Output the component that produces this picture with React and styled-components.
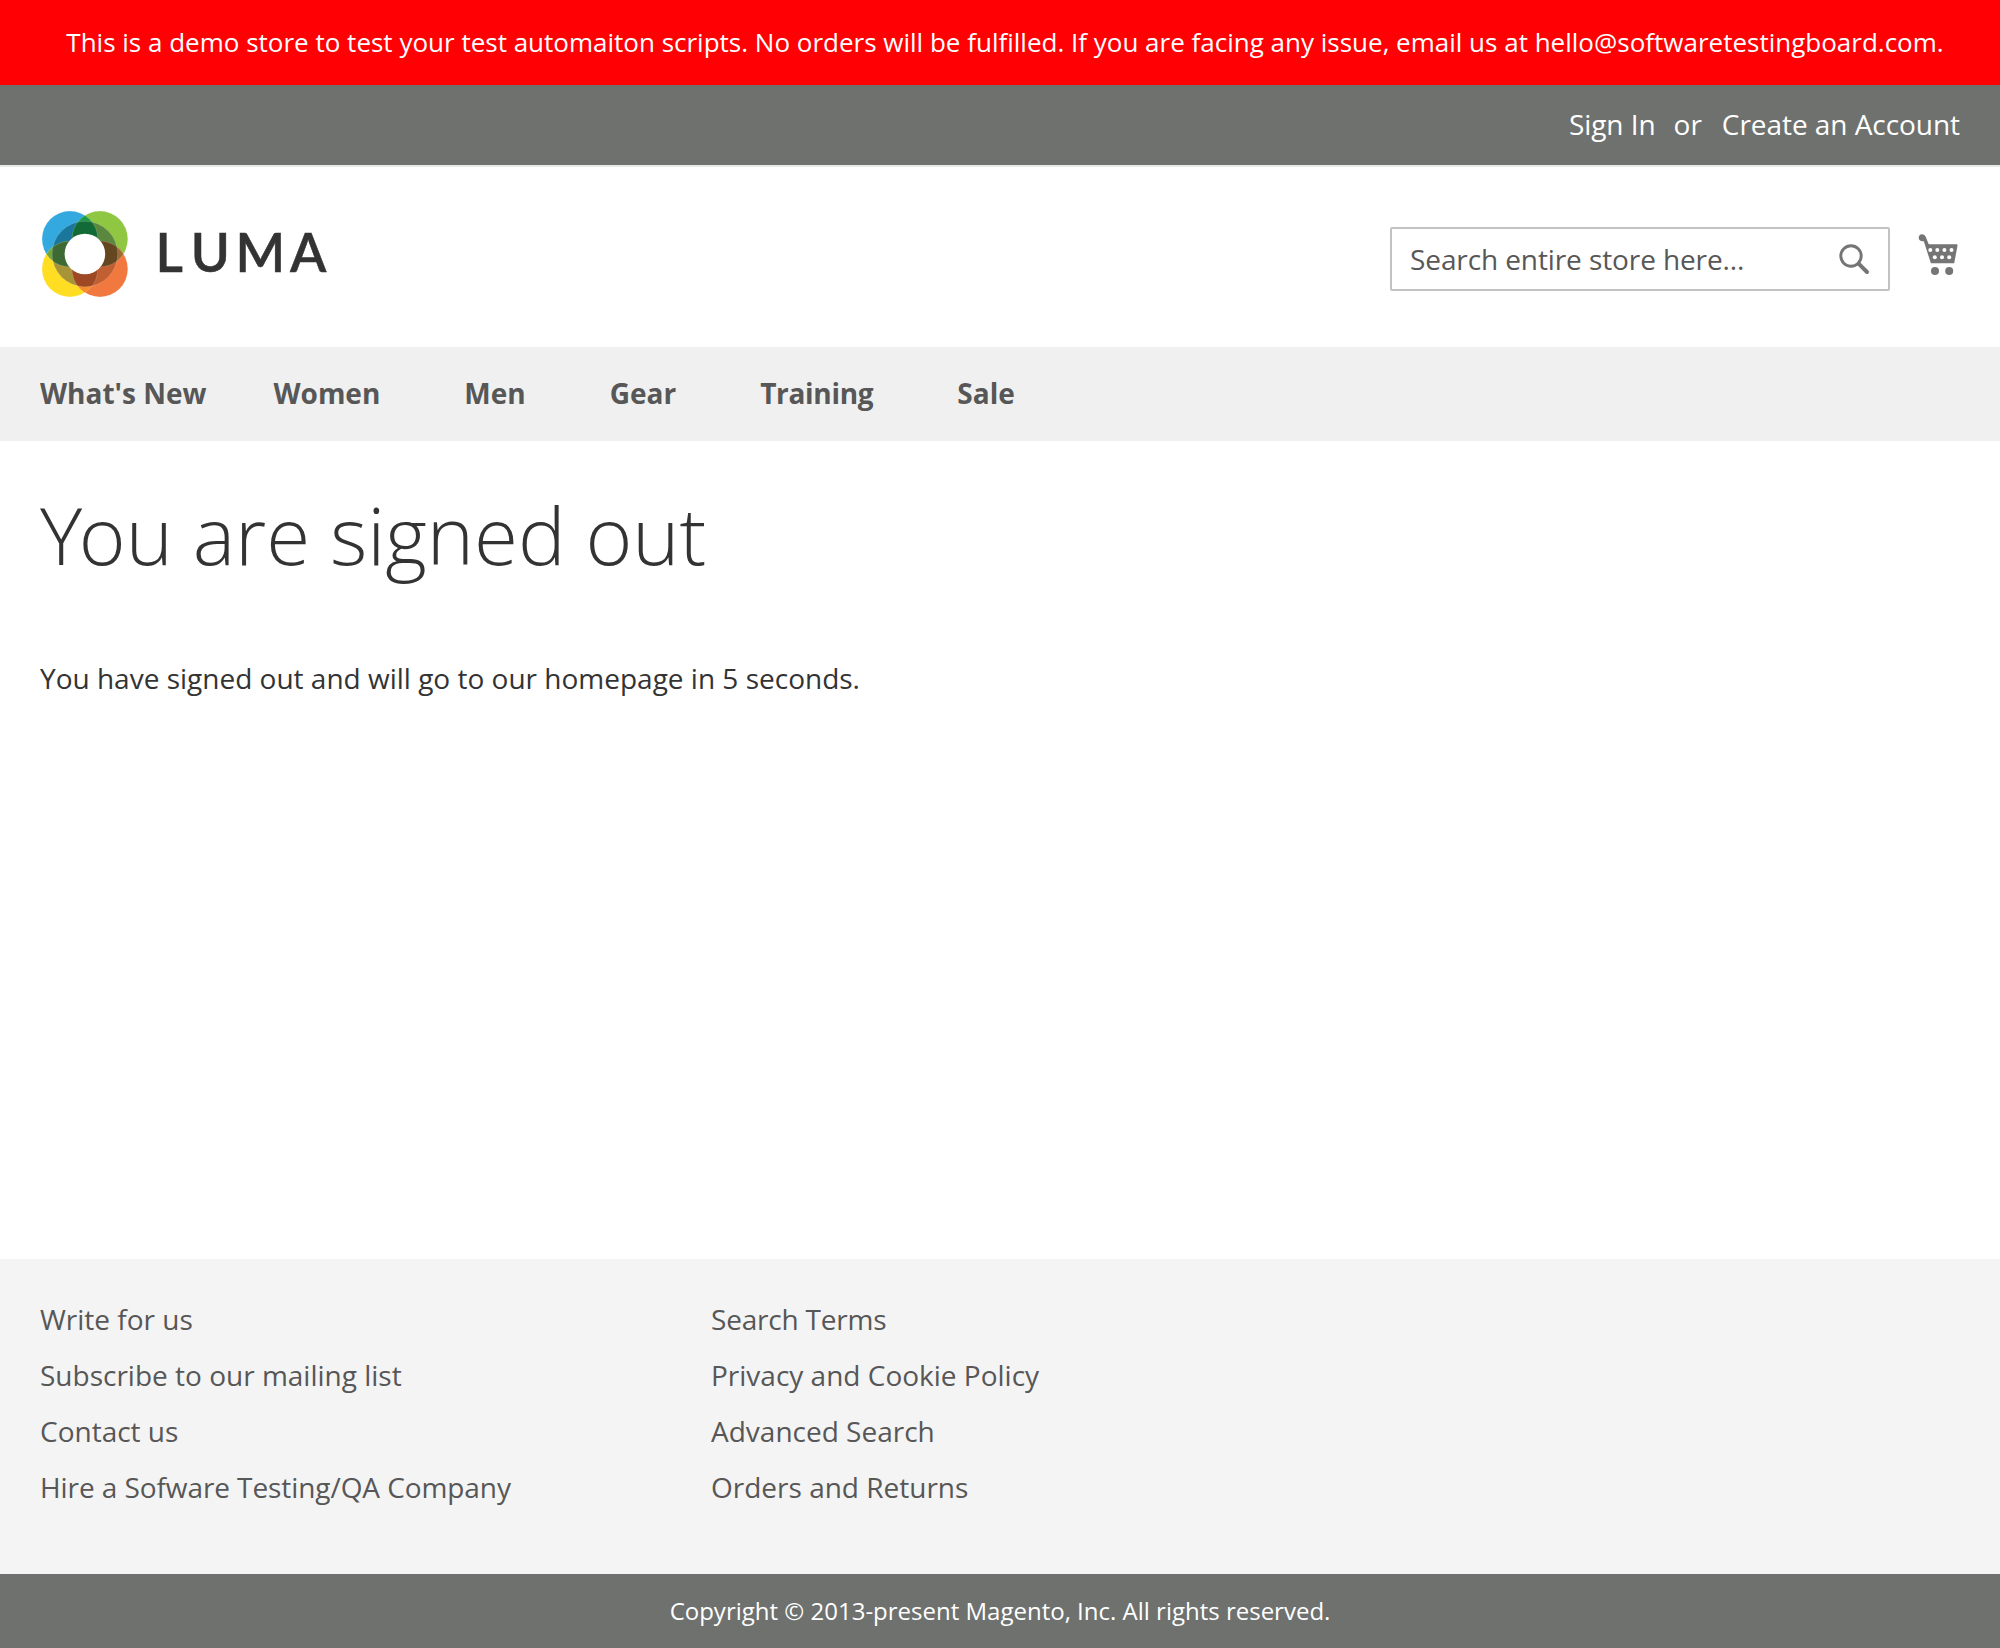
import React from 'react';
import styled, { createGlobalStyle } from 'styled-components';

const GlobalStyle = createGlobalStyle`
  *, *::before, *::after { box-sizing: border-box; }
  body {
    margin: 0;
    background: #fff;
    color: #333;
    font-family: "Open Sans", sans-serif;
    font-size: 28px;
    line-height: 40px;
  }
`;

const Page = styled.div`
  display: flex;
  flex-direction: column;
  min-height: 1648px;
`;

const Notice = styled.p`
  margin: 0;
  height: 85px;
  padding: 22px 0 0 10px;
  background: #ff0004;
  color: #fff;
  font-size: 26px;
  text-align: center;
  white-space: nowrap;
`;

const AccountBar = styled.div`
  display: flex;
  justify-content: flex-end;
  height: 82px;
  padding: 19px 40px 0;
  background: #6e716e;
  border-bottom: 2px solid #e8e8e8;
  color: #fff;
`;

const AccountLink = styled.a`
  color: inherit;
  margin-left: ${(p) => p.$gap || 0}px;
  letter-spacing: -0.05px;
`;

const Header = styled.header`
  display: flex;
  align-items: flex-start;
  height: 180px;
  padding: 42px 40px 0;
`;

const Logo = styled.a`
  margin-right: auto;
  svg { display: block; }
`;

const Wordmark = styled.text`
  font-family: Lato, sans-serif;
  font-weight: 600;
  font-size: 53px;
  fill: #333;
`;

const SearchBox = styled.form`
  display: flex;
  align-items: center;
  justify-content: space-between;
  width: 500px;
  height: 64px;
  margin-top: 18px;
  padding: 0 18px 0 18px;
  border: 2px solid #c2c2c2;
  border-radius: 2px;
  color: #575757;
  letter-spacing: -0.1px;
`;

const Cart = styled.a`
  margin: 24px 0 0 28px;
  svg { display: block; }
`;

const Nav = styled.nav`
  display: flex;
  height: 94px;
  padding: 26px 40px 0;
  background: #f0f0f0;
  color: #575757;
  font-weight: 700;
`;

const NavItem = styled.a`
  margin-right: ${(p) => p.$after || 84}px;
  letter-spacing: ${(p) => p.$tracking || 0}px;
`;

const Main = styled.main`
  flex: 1;
  padding: 49px 40px 0;
`;

const Title = styled.h1`
  margin: 0;
  font-size: 80px;
  font-weight: 300;
  line-height: 88px;
  word-spacing: -1px;

  &::first-letter {
    letter-spacing: -3.5px;
  }
`;

const Message = styled.p`
  margin: 80px 0 0;
`;

const Footer = styled.footer`
  display: flex;
  height: 315px;
  padding: 40px 40px 0;
  background: #f4f4f4;
  color: #575757;
`;

const LinkList = styled.ul`
  width: 671px;
  margin: 0;
  padding: 0;
  list-style: none;
`;

const LinkItem = styled.li`
  margin-bottom: 16px;
  letter-spacing: ${(p) => p.$tracking || 0}px;
`;

const Copyright = styled.small`
  display: block;
  height: 74px;
  padding-top: 17px;
  background: #6e716e;
  color: #fff;
  font-size: 24px;
  text-align: center;
`;

const navItems = [
  { label: "What's New", after: 67 },
  { label: 'Women' },
  { label: 'Men' },
  { label: 'Gear' },
  { label: 'Training', tracking: -0.3 },
  { label: 'Sale' },
];

const footerColumns = [
  [
    { label: 'Write for us' },
    { label: 'Subscribe to our mailing list' },
    { label: 'Contact us' },
    { label: 'Hire a Sofware Testing/QA Company', tracking: -0.08 },
  ],
  [
    { label: 'Search Terms', tracking: -0.2 },
    { label: 'Privacy and Cookie Policy' },
    { label: 'Advanced Search' },
    { label: 'Orders and Returns' },
  ],
];

const LumaLogo = () => (
  <svg width="296" height="92" viewBox="40 209 296 92" role="img" aria-label="Luma">
    <defs>
      <clipPath id="blue"><circle cx="69.9" cy="239" r="27.9" /></clipPath>
      <clipPath id="orange"><circle cx="99.9" cy="269" r="27.9" /></clipPath>
      <clipPath id="ring"><circle cx="84.9" cy="254" r="32.8" /></clipPath>
    </defs>
    <circle cx="69.9" cy="239" r="27.9" fill="#33a9e0" />
    <circle cx="99.9" cy="239" r="27.9" fill="#8fc642" />
    <circle cx="69.9" cy="269" r="27.9" fill="#fedd22" />
    <circle cx="99.9" cy="269" r="27.9" fill="#f1793f" />
    <g clipPath="url(#blue)">
      <circle cx="99.9" cy="239" r="27.9" fill="#1c9a49" />
      <circle cx="69.9" cy="269" r="27.9" fill="#6fa53a" />
    </g>
    <g clipPath="url(#orange)">
      <circle cx="99.9" cy="239" r="27.9" fill="#9c6a35" />
      <circle cx="69.9" cy="269" r="27.9" fill="#f68b2c" />
    </g>
    <g clipPath="url(#ring)">
      <circle cx="69.9" cy="239" r="27.9" fill="#1a769b" />
      <circle cx="99.9" cy="239" r="27.9" fill="#5c873f" />
      <circle cx="69.9" cy="269" r="27.9" fill="#a79437" />
      <circle cx="99.9" cy="269" r="27.9" fill="#c05f31" />
      <g clipPath="url(#blue)">
        <circle cx="99.9" cy="239" r="27.9" fill="#126b37" />
        <circle cx="69.9" cy="269" r="27.9" fill="#3d6a33" />
      </g>
      <g clipPath="url(#orange)">
        <circle cx="99.9" cy="239" r="27.9" fill="#644620" />
        <circle cx="69.9" cy="269" r="27.9" fill="#9e4824" />
      </g>
    </g>
    <g fill="none" stroke="#fff" strokeOpacity="0.3" strokeWidth="0.5">
      <circle cx="69.9" cy="239" r="27.9" />
      <circle cx="99.9" cy="239" r="27.9" />
      <circle cx="69.9" cy="269" r="27.9" />
      <circle cx="99.9" cy="269" r="27.9" />
      <circle cx="84.9" cy="254" r="32.8" />
    </g>
    <circle cx="84.9" cy="254" r="20.3" fill="#fff" />
    <Wordmark x="155.5 190.7 235.5 290" y="272" stroke="#333" strokeWidth="0.5">LUMA</Wordmark>
  </svg>
);

const SearchIcon = () => (
  <svg width="32" height="32" viewBox="0 0 32 32" fill="none" stroke="#757575">
    <circle cx="13" cy="13" r="10.2" strokeWidth="2.9" />
    <path d="M20.600 20.600 29 29" strokeWidth="4" strokeLinecap="round" />
  </svg>
);

const CartIcon = () => (
  <svg width="42" height="42" viewBox="0 0 42 42" fill="#757575">
    <path d="M0.800 5.500C.400 3 1.800 1.300 3.800 1.300c2 0 3.200.800 4 2.700L10.700 11.300h27.600c.900 0 1.400.600 1.200 1.500L36.200 30.300H12.900L5.800 8.200C3.200 8.600 1.200 7.700.800 5.500Z" />
    <g fill="#fff">
      <circle cx="12.300" cy="17" r="2" /><circle cx="19.300" cy="17" r="2" />
      <circle cx="26.400" cy="17" r="2" /><circle cx="33.500" cy="17" r="2" />
      <circle cx="16.800" cy="24.300" r="2" /><circle cx="24" cy="24.300" r="2" />
      <circle cx="31.200" cy="24.300" r="2" />
    </g>
    <circle cx="17" cy="38" r="4" /><circle cx="31.200" cy="38" r="4" />
  </svg>
);

export default function App() {
  return (
    <>
      <GlobalStyle />
      <Page>
        <Notice>
          This is a demo store to test your test automaiton scripts. No orders will be fulfilled. If you are facing any issue, email us at hello@softwaretestingboard.com.
        </Notice>
        <AccountBar>
          <AccountLink>Sign In</AccountLink>
          <AccountLink as="span" $gap={18}>or</AccountLink>
          <AccountLink $gap={20}>Create an Account</AccountLink>
        </AccountBar>
        <Header>
          <Logo><LumaLogo /></Logo>
          <SearchBox>
            <span>Search entire store here...</span>
            <SearchIcon />
          </SearchBox>
          <Cart><CartIcon /></Cart>
        </Header>
        <Nav>
          {navItems.map(({ label, after, tracking }) => (
            <NavItem key={label} $after={after} $tracking={tracking}>{label}</NavItem>
          ))}
        </Nav>
        <Main>
          <Title>You are signed out</Title>
          <Message>You have signed out and will go to our homepage in 5 seconds.</Message>
        </Main>
        <Footer>
          {footerColumns.map((links) => (
            <LinkList key={links[0].label}>
              {links.map(({ label, tracking }) => (
                <LinkItem key={label} $tracking={tracking}>{label}</LinkItem>
              ))}
            </LinkList>
          ))}
        </Footer>
        <Copyright>Copyright © 2013-present Magento, Inc. All rights reserved.</Copyright>
      </Page>
    </>
  );
}
